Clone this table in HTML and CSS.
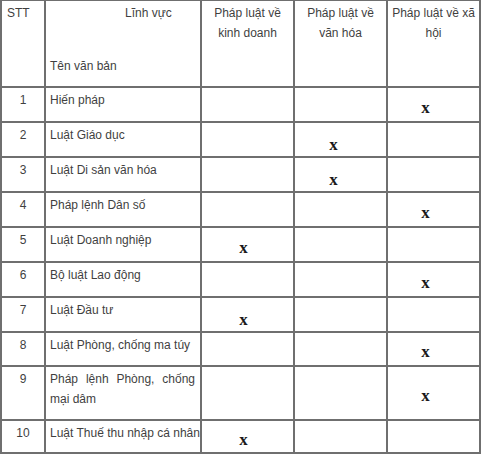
FILE: index.html
```html
<!DOCTYPE html>
<html lang="vi">
<head>
<meta charset="utf-8">
<title>Bảng phân loại văn bản pháp luật</title>
<link rel="stylesheet" href="styles.css">
</head>
<body>
<table class="grid">
  <colgroup>
    <col class="c-stt">
    <col class="c-name">
    <col class="c-law">
    <col class="c-law">
    <col class="c-law">
  </colgroup>
  <tr class="r-head">
    <td class="stt-h">STT</td>
    <td class="name-h">
      <div class="field">Lĩnh vực</div>
      <div class="doc">Tên văn bản</div>
    </td>
    <td class="col-h">Pháp luật về kinh doanh</td>
    <td class="col-h">Pháp luật về văn hóa</td>
    <td class="col-h">Pháp luật về xã hội</td>
  </tr>
  <tr class="r-std">
    <td class="stt">1</td><td class="name">Hiến pháp</td>
    <td class="mark"></td><td class="mark"></td><td class="mark m3">x</td>
  </tr>
  <tr class="r-std">
    <td class="stt">2</td><td class="name">Luật Giáo dục</td>
    <td class="mark"></td><td class="mark m2 low">x</td><td class="mark"></td>
  </tr>
  <tr class="r-std">
    <td class="stt">3</td><td class="name">Luật Di sản văn hóa</td>
    <td class="mark"></td><td class="mark m2 low">x</td><td class="mark"></td>
  </tr>
  <tr class="r-std">
    <td class="stt">4</td><td class="name">Pháp lệnh Dân số</td>
    <td class="mark"></td><td class="mark"></td><td class="mark m3">x</td>
  </tr>
  <tr class="r-std">
    <td class="stt">5</td><td class="name">Luật Doanh nghiệp</td>
    <td class="mark m1">x</td><td class="mark"></td><td class="mark"></td>
  </tr>
  <tr class="r-std">
    <td class="stt">6</td><td class="name">Bộ luật Lao động</td>
    <td class="mark"></td><td class="mark"></td><td class="mark m3">x</td>
  </tr>
  <tr class="r-std">
    <td class="stt">7</td><td class="name">Luật Đầu tư</td>
    <td class="mark m1 low">x</td><td class="mark"></td><td class="mark"></td>
  </tr>
  <tr class="r-8">
    <td class="stt">8</td><td class="name">Luật Phòng, chống ma túy</td>
    <td class="mark"></td><td class="mark"></td><td class="mark m3">x</td>
  </tr>
  <tr class="r-9">
    <td class="stt">9</td><td class="name justify">Pháp lệnh Phòng, chống mại dâm</td>
    <td class="mark"></td><td class="mark"></td><td class="mark m3">x</td>
  </tr>
  <tr class="r-10">
    <td class="stt">10</td><td class="name nowrap">Luật Thuế thu nhập cá nhân</td>
    <td class="mark m1">x</td><td class="mark"></td><td class="mark"></td>
  </tr>
</table>
</body>
</html>
```
FILE: styles.css
```css
html, body {
  margin: 0;
  padding: 0;
  background: #ffffff;
}

.grid {
  border-collapse: separate;
  border-spacing: 2px;
  background: #6f6f6f;
  width: 481px;
  table-layout: fixed;
  margin-top: -1px;
  font-family: "Liberation Sans", Arial, sans-serif;
  font-size: 12px;
  line-height: 20px;
  color: #3f3f3f;
}

.c-stt { width: 42px; }
.c-name { width: 154px; }
.c-law { width: 91px; }

.grid td {
  background: #ffffff;
  padding: 2px 4px 0 4px;
  vertical-align: top;
  box-sizing: border-box;
}

.grid td.name {
  padding-right: 1px;
}

.grid td.name.nowrap {
  white-space: nowrap;
}

.r-head { height: 85px; }
.r-std { height: 33px; }
.r-8 { height: 32px; }
.r-9 { height: 52px; }
.r-10 { height: 31px; }

.stt-h {
  text-align: left;
}

.grid td.stt-h { padding-left: 5px; }

.grid td.stt {
  text-align: center;
  padding-left: 0;
  padding-right: 0;
}

.name-h .field {
  padding-left: 75px;
}

.name-h .doc {
  margin-top: 33px;
}

.grid td.col-h {
  text-align: center;
  padding-left: 3px;
  padding-right: 3px;
}

.grid td.name.justify {
  text-align: justify;
  padding-right: 5px;
}

.grid td.mark {
  font-family: "Liberation Serif", "Times New Roman", serif;
  font-weight: bold;
  font-size: 17px;
  color: #1a1a1a;
  text-align: center;
  vertical-align: middle;
  padding-top: 6px;
}

.grid td.mark.low { padding-top: 10px; }

.grid td.m1 { padding-right: 12px; }
.grid td.m2 { padding-right: 18px; }
.grid td.m3 { padding-right: 20px; }
```
